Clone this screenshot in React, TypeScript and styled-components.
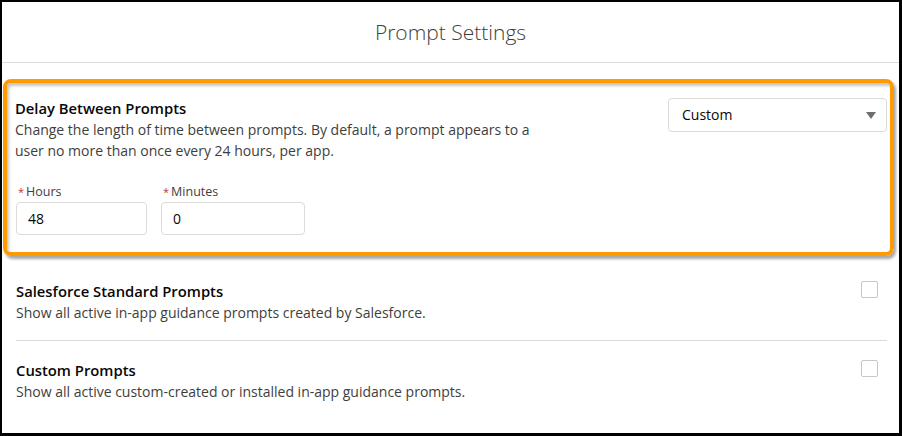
import styled, { createGlobalStyle } from "styled-components";

const GlobalStyle = createGlobalStyle`
  html, body {
    margin: 0;
    padding: 0;
    background: #ffffff;
  }
  * {
    box-sizing: border-box;
  }
`;

const Frame = styled.div`
  width: 902px;
  height: 436px;
  border-style: solid;
  border-color: #000;
  border-width: 2px 3px 3px 2px;
  background: #fff;
  font-family: "Open Sans", "Liberation Sans", sans-serif;
  color: #080707;
  overflow: hidden;
`;

const Header = styled.div`
  height: 61px;
  display: flex;
  align-items: center;
  justify-content: center;
  border-bottom: 1px solid #dddbda;
  font-size: 21px;
  font-weight: 300;
  color: #3e3e3c;
`;

const Body = styled.div`
  padding: 16px 0 0 1px;
`;

const Highlight = styled.div`
  width: 891px;
  border: 4px solid #ff9a00;
  border-radius: 8px;
  padding: 15px 3px 17px 8px;
  box-shadow: 2px 3px 3px rgba(0, 0, 0, 0.35),
    inset 2px 3px 3px rgba(0, 0, 0, 0.22);
`;

const TopRow = styled.div`
  display: flex;
  justify-content: space-between;
  align-items: flex-start;
`;

const Title = styled.div`
  font-size: 14.8px;
  font-weight: 600;
  line-height: 20px;
  margin-bottom: 1px;
  color: #080707;
`;

const Description = styled.div<{ $width?: string }>`
  font-size: 14px;
  line-height: 21px;
  color: #3e3e3c;
  max-width: ${({ $width }) => $width ?? "none"};
`;

const Select = styled.div`
  width: 219px;
  height: 34px;
  border: 1px solid #dddbda;
  border-radius: 4px;
  display: flex;
  align-items: center;
  justify-content: space-between;
  padding: 0 10px 2px 13px;
  font-size: 14px;
  color: #080707;
`;

const Arrow = styled.span`
  width: 0;
  height: 0;
  margin-top: 2px;
  border-left: 5.5px solid transparent;
  border-right: 5.5px solid transparent;
  border-top: 7px solid #706e6b;
`;

const Fields = styled.div`
  display: flex;
  gap: 14px;
  margin: 21px 0 0 1px;
`;

const Field = styled.div<{ $width: number }>`
  width: ${({ $width }) => $width}px;
  display: flex;
  flex-direction: column;
`;

const Label = styled.div`
  font-size: 12.5px;
  line-height: 20px;
  color: #3e3e3c;
  padding-left: 2px;
`;

const Required = styled.abbr`
  color: #c23934;
  text-decoration: none;
  margin-right: 2px;
  font-size: 11px;
`;

const Input = styled.div`
  height: 33px;
  border: 1px solid #dddbda;
  border-radius: 4px;
  display: flex;
  align-items: center;
  padding-left: 11px;
  font-size: 14px;
  color: #080707;
`;

const Rows = styled.div`
  padding: 25px 12px 0 13px;
`;

const Row = styled.div<{ $divider?: boolean }>`
  display: flex;
  justify-content: space-between;
  align-items: flex-start;
  padding-bottom: ${({ $divider }) => ($divider ? "17px" : "0")};
  margin-bottom: ${({ $divider }) => ($divider ? "19px" : "0")};
  border-bottom: ${({ $divider }) => ($divider ? "1px solid #dddbda" : "none")};
`;

const Checkbox = styled.span`
  width: 17px;
  height: 17px;
  margin: 0 9px 0 0;
  border: 1px solid #c9c7c5;
  border-radius: 2px;
  background: #fff;
`;

export default function App() {
  return (
    <>
      <GlobalStyle />
      <Frame>
        <Header>Prompt Settings</Header>
        <Body>
          <Highlight>
            <TopRow>
              <div>
                <Title>Delay Between Prompts</Title>
                <Description $width="525px">
                  Change the length of time between prompts. By default, a
                  prompt appears to a user no more than once every 24 hours, per
                  app.
                </Description>
              </div>
              <Select>
                Custom
                <Arrow />
              </Select>
            </TopRow>
            <Fields>
              <Field $width={131}>
                <Label>
                  <Required title="required">*</Required>Hours
                </Label>
                <Input>48</Input>
              </Field>
              <Field $width={144}>
                <Label>
                  <Required title="required">*</Required>Minutes
                </Label>
                <Input>0</Input>
              </Field>
            </Fields>
          </Highlight>
          <Rows>
            <Row $divider>
              <div>
                <Title>Salesforce Standard Prompts</Title>
                <Description>
                  Show all active in-app guidance prompts created by Salesforce.
                </Description>
              </div>
              <Checkbox />
            </Row>
            <Row>
              <div>
                <Title>Custom Prompts</Title>
                <Description>
                  Show all active custom-created or installed in-app guidance
                  prompts.
                </Description>
              </div>
              <Checkbox />
            </Row>
          </Rows>
        </Body>
      </Frame>
    </>
  );
}
